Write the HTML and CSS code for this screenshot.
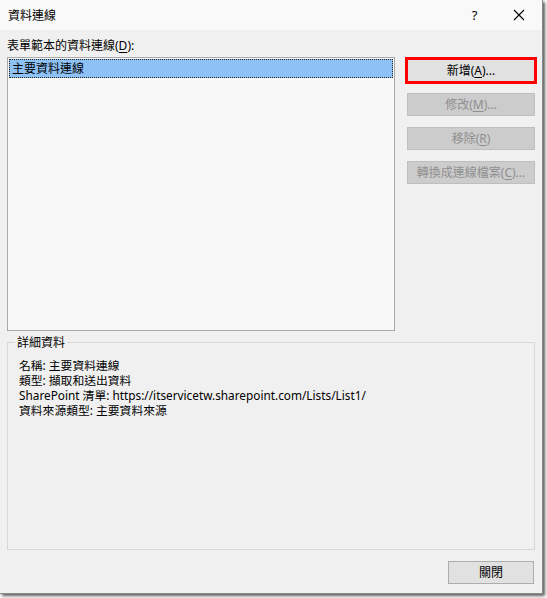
FILE: index.html
```html
<!DOCTYPE html>
<html lang="zh-Hant">
<head>
<meta charset="utf-8">
<title>資料連線</title>
<link rel="stylesheet" href="styles.css">
</head>
<body>
<div class="window">
  <div class="titlebar">
    <span class="title">資料連線</span>
    <span class="help">?</span>
    <span class="close">
      <svg width="12" height="12" viewBox="0 0 12 12"><path d="M1 1 L11 11 M11 1 L1 11" stroke="#000" stroke-width="1.1" fill="none"/></svg>
    </span>
  </div>
  <div class="body">
    <div class="label">表單範本的資料連線(<u>D</u>):</div>
    <div class="main">
      <div class="list">
        <div class="item selected">主要資料連線</div>
      </div>
      <div class="actions">
        <button class="btn highlight">新增(<u>A</u>)...</button>
        <button class="btn disabled">修改(<u>M</u>)...</button>
        <button class="btn disabled">移除(<u>R</u>)</button>
        <button class="btn disabled">轉換成連線檔案(<u>C</u>)...</button>
      </div>
    </div>
    <fieldset class="details">
      <legend>詳細資料</legend>
      <div class="info">
        <div class="line">名稱: 主要資料連線</div>
        <div class="line">類型: 擷取和送出資料</div>
        <div class="line">SharePoint 清單: https://itservicetw.sharepoint.com/Lists/List1/</div>
        <div class="line">資料來源類型: 主要資料來源</div>
      </div>
    </fieldset>
    <div class="footer">
      <button class="btn close-btn">關閉</button>
    </div>
  </div>
</div>
</body>
</html>
```

FILE: styles.css
```css
* { box-sizing: border-box; }
html, body { margin: 0; padding: 0; }
body {
  background: #ffffff;
  width: 547px;
  height: 598px;
  overflow: hidden;
  font-family: "Noto Sans", "Noto Sans CJK TC", sans-serif;
  font-size: 12px;
  color: #000;
}
.window {
  width: 543px;
  height: 594px;
  background: #f0f0f0;
  border-right: 1px solid #8a8a8a;
  border-bottom: 1px solid #8a8a8a;
  box-shadow: 2px 2px 3px rgba(0,0,0,0.65);
  display: flex;
  flex-direction: column;
}
.titlebar {
  height: 30px;
  background: #f9f9f9;
  display: flex;
  align-items: center;
  padding-left: 8px;
  flex: none;
}
.title { flex: 1; line-height: 15px; }
.help {
  width: 46px;
  text-align: center;
  font-size: 13px;
  padding-left: 3px;
}
.close {
  width: 46px;
  display: flex;
  justify-content: center;
  align-items: center;
}
.body {
  flex: 1;
  display: flex;
  flex-direction: column;
  padding: 8px 7px 9px 7px;
}
.label { line-height: 15px; height: 15px; margin-bottom: 4px; }
u { text-decoration: underline; text-underline-offset: 2px; }
.main {
  display: flex;
  height: 274px;
  flex: none;
}
.list {
  width: 388px;
  height: 274px;
  background: #f8f8f8;
  border: 1px solid #a9a9a9;
  padding: 1px;
}
.item {
  height: 19px;
  line-height: 18px;
  padding-left: 2px;
}
.item.selected {
  background: #8ec2f5;
  border: 1px dotted #222;
}
.actions {
  margin-left: 12px;
  width: 128px;
  display: flex;
  flex-direction: column;
  gap: 11px;
  padding-top: 2px;
}
.btn {
  font: inherit;
  height: 23px;
  padding: 0;
  background: #e1e1e1;
  border: 1px solid #adadad;
  color: #000;
  line-height: 19px;
}
.btn.highlight {
  outline: 3px solid #ff0000;
  outline-offset: -1px;
}
.btn.disabled {
  background: #cccccc;
  border-color: #bfbfbf;
  color: #8f8f8f;
}
.details {
  flex: 1;
  margin: 4px 0 0 0;
  padding: 0;
  min-width: 0;
  border: 1px solid #d7d7d7;
}
.details legend {
  margin-left: 7px;
  padding: 0 2px;
  line-height: 15px;
}
.info {
  padding: 8px 11px 0 11px;
}
.line {
  height: 15px;
  line-height: 15px;
  font-size: 11.8px;
  white-space: nowrap;
}
.footer {
  display: flex;
  justify-content: flex-end;
  margin-top: 11px;
  padding-right: 1px;
}
.close-btn { width: 86px; }
```
